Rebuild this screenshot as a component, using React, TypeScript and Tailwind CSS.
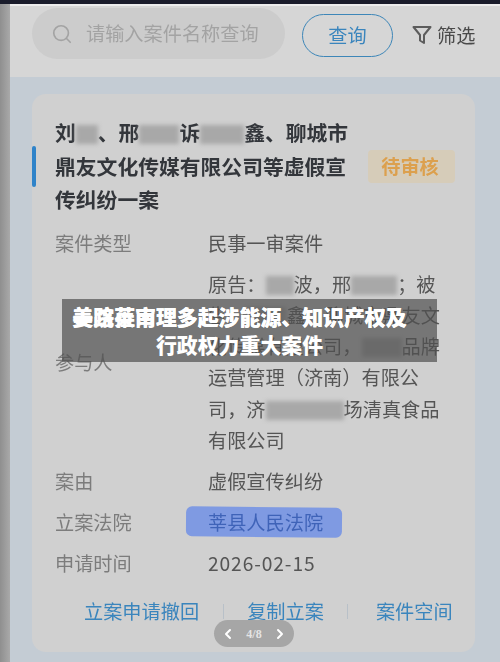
import React from "react";
import { Search, ChevronLeft, ChevronRight } from "lucide-react";

const font = "font-['Noto_Sans_CJK_SC','Noto_Sans',sans-serif]";

const Smudge = ({ w }: { w: string }) => (
  <span className={`inline-block h-[19px] align-[-3px] bg-[#a8a8a8] blur-[2px] ${w}`} />
);

const Row = ({ label, children, className = "" }: { label: string; children: React.ReactNode; className?: string }) => (
  <div className={`flex leading-[31px] ${className}`}>
    <div className="w-[153px] shrink-0 text-[#7c7c7c]">{label}</div>
    <div className="text-[#555555]">{children}</div>
  </div>
);

const App = () => {
  return (
    <div className={`relative h-[662px] w-[500px] overflow-hidden bg-[#1a1c2b] text-[19.2px] ${font}`}>
      {/* dark strip at top */}
      <div className="h-[4px]" />
      <div className="flex h-[658px]">
        <div className="w-[10px] shrink-0 bg-gradient-to-r from-[#8f8f8f] to-[#a9a9a9]" />
        <div className="flex flex-1 flex-col border-t-2 border-[#ececec] bg-[#c4ccd4] blur-[0.6px]">
          {/* search bar */}
          <div className="flex h-[71px] shrink-0 items-start bg-[#d6d6d6] pl-[22px] pt-[2px]">
            <div className="flex h-[51px] w-[253px] items-center rounded-full bg-[#cccccc] pl-[19px] text-[#a3a3a3]">
              <Search className="mr-[13px] h-[22px] w-[22px]" strokeWidth={1.8} />
              <span className="whitespace-nowrap">请输入案件名称查询</span>
            </div>
            <div className="ml-[17px] mt-[6px] flex h-[43px] w-[91px] items-center justify-center rounded-full border border-[#3d86b8] text-[#3a85bd]">
              查询
            </div>
            <svg className="ml-[18px] mt-[16px] h-[22px] w-[22px]" viewBox="0 0 22 22" fill="none" stroke="#5c5c5c" strokeWidth="2" strokeLinejoin="round">
              <path d="M2.5 3h17l-6.5 8v8l-4-2.500v-5.500z" />
            </svg>
            <span className="ml-[4px] mt-[13px] leading-[28px] text-[#4a4a4a]">筛选</span>
          </div>

          {/* card */}
          <div className="relative ml-[22px] mt-[17px] h-[558px] w-[443px] rounded-[14px] bg-[#d0d0d0] pl-[23px] pt-[22px]">
            <div className="absolute left-0 top-[52px] h-[41px] w-[4px] rounded-sm bg-[#2f83c9]" />
            <div className="flex items-center">
              <div className="w-[293px] shrink-0 text-[20.8px] font-bold leading-[33.500px] text-[#33363b]">
                <div className="whitespace-nowrap">
                  刘<Smudge w="w-[22px]" />、邢<Smudge w="w-[40px]" />诉<Smudge w="w-[44px]" />鑫、聊城市
                </div>
                <div className="whitespace-nowrap">鼎友文化传媒有限公司等虚假宣</div>
                <div>传纠纷一案</div>
              </div>
              <div className="ml-[20px] flex h-[33px] w-[87px] items-center justify-center rounded-[4px] bg-[#d6ccb9] pr-[3px] font-semibold text-[#dca04e]">
                待审核
              </div>
            </div>

            <div className="mt-[11px] flex flex-col gap-[10px]">
              <Row label="案件类型">民事一审案件</Row>
              <div className="flex items-center leading-[31.300px]">
                <div className="w-[153px] shrink-0 text-[#7c7c7c]">参与人</div>
                <div className="whitespace-nowrap text-[#555555]">
                  <div>原告：<Smudge w="w-[28px]" />波，邢<Smudge w="w-[46px]" />；被</div>
                  <div>告：<Smudge w="w-[40px]" />鑫、聊城市鼎友文</div>
                  <div>化传媒有限公司，<Smudge w="w-[40px]" />品牌</div>
                  <div>运营管理（济南）有限公</div>
                  <div>司，济<Smudge w="w-[78px]" />场清真食品</div>
                  <div>有限公司</div>
                </div>
              </div>
              <Row label="案由">虚假宣传纠纷</Row>
              <Row label="立案法院">
                <span className="relative inline-block">
                  <span className="absolute -left-[22px] -right-[19px] top-0 h-[30px] rotate-[0.5deg] rounded-[6px] bg-[#7f9ae2]" />
                  <span className="relative text-[#3f63b8]">莘县人民法院</span>
                </span>
              </Row>
              <Row label="申请时间"><span className="tracking-[0.9px]">2026-02-15</span></Row>
            </div>

            {/* actions */}
            <div className="mt-[17px] flex items-center whitespace-nowrap leading-[31px] text-[#3a85bd]">
              <span className="ml-[29px]">立案申请撤回</span>
              <span className="ml-[24px] h-[15px] w-px bg-[#b8c0c8]" />
              <span className="ml-[23px]">复制立案</span>
              <span className="ml-[23px] h-[15px] w-px bg-[#b8c0c8]" />
              <span className="ml-[28px]">案件空间</span>
            </div>
          </div>
        </div>
      </div>

      {/* pager */}
      <div className="absolute left-[214px] top-[620px] flex h-[27px] w-[80px] items-center justify-between rounded-full bg-[#a6a6a6] px-[6px] text-white">
        <ChevronLeft className="h-[16px] w-[16px]" strokeWidth={3} />
        <span className="font-['Liberation_Serif',serif] text-[12px] font-bold text-[#e4e4e4]">4/8</span>
        <ChevronRight className="h-[16px] w-[16px]" strokeWidth={3} />
      </div>

      {/* caption over picture */}
      <div className="absolute left-[62px] top-[299px] h-[63px] w-[375px] bg-[#505050]/70 pr-[20px] text-center text-[20.9px] font-black leading-[28px] text-white">
        <div className="relative pt-[3px]">
          <div className="whitespace-nowrap">姜路莅南理多起涉能源、知识产权及</div>
          <div className="absolute left-0 right-[20px] top-[3px] w-full whitespace-nowrap">美院莱审理多起涉能源、知识产权及</div>
        </div>
        <div className="whitespace-nowrap">行政权力重大案件</div>
      </div>
    </div>
  );
};

export default App;
